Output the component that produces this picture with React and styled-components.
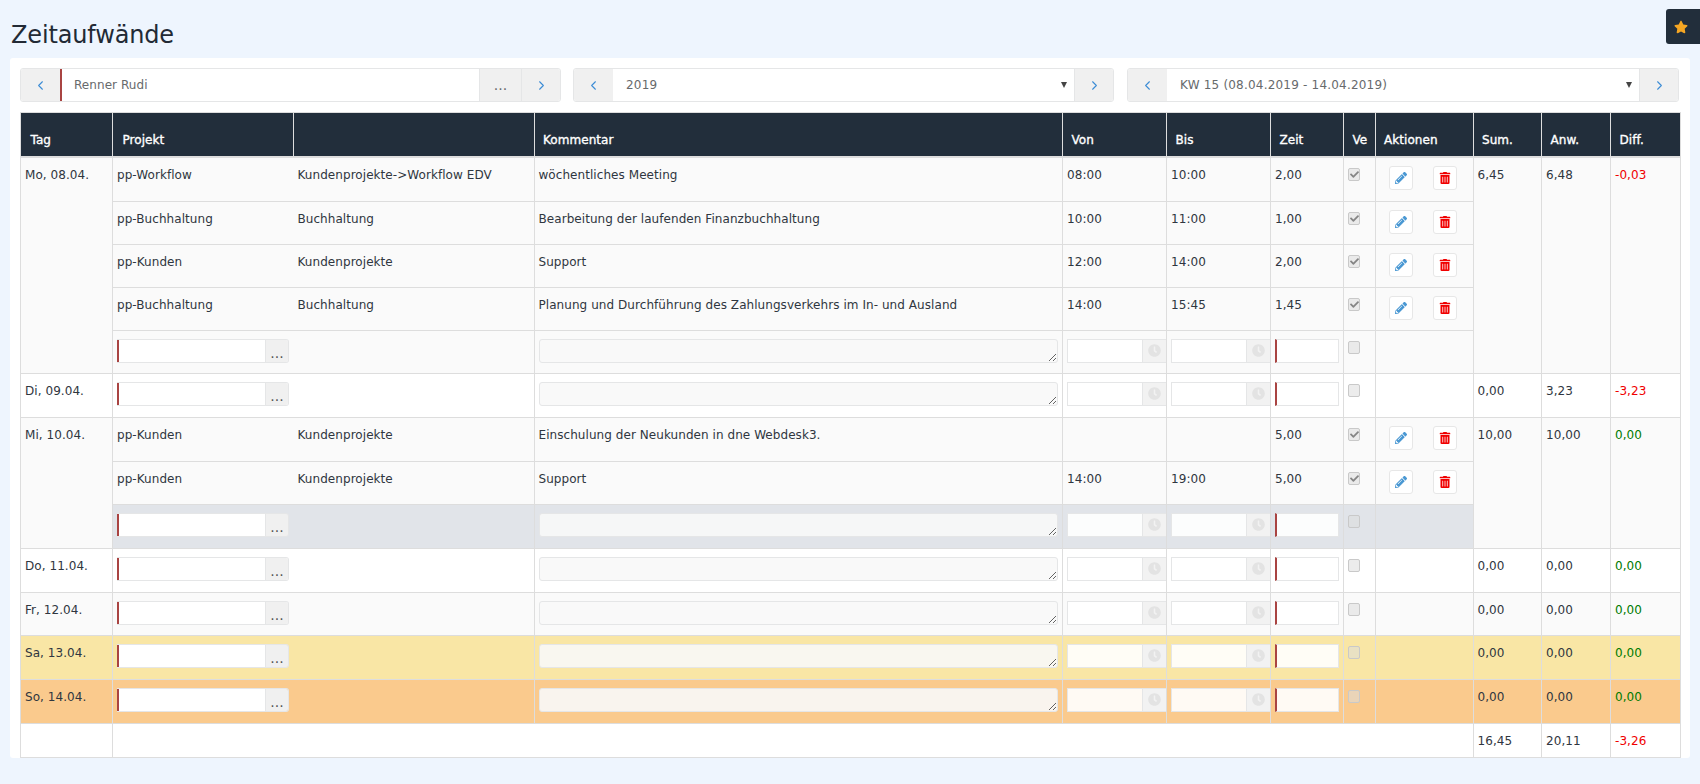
import React from "react";
import styled, { createGlobalStyle } from "styled-components";
import { ChevronLeft, ChevronRight } from "lucide-react";
import { FaStar, FaPencilAlt, FaTrashAlt, FaClock, FaCheck } from "react-icons/fa";

const Global = createGlobalStyle`
  html, body { margin: 0; padding: 0; background: #eef5fe; }
  body { font-family: "DejaVu Sans", Verdana, sans-serif; font-size: 12px; letter-spacing: 0.06px; color: #2f3640; overflow: hidden; }
  * { box-sizing: border-box; }
`;

const Page = styled.div`
  position: relative;
  min-height: 784px;
  padding: 0 10px;
`;
const Title = styled.h1`
  margin: 0;
  height: 58px;
  padding: 19px 0 0 1px;
  font-size: 24px;
  line-height: 32px;
  font-weight: 400;
  letter-spacing: -0.15px;
  color: #222a35;
`;
const StarTab = styled.button`
  position: absolute;
  top: 9px;
  right: 0;
  width: 34px;
  height: 35px;
  border: 0;
  padding: 1px 4px 0 0;
  border-radius: 3px 0 0 3px;
  background: #222e3b;
  color: #f5a623;
  display: flex;
  align-items: center;
  justify-content: center;
  font-size: 14px;
`;
const Card = styled.main`
  background: #fff;
  border-radius: 3px;
  padding: 10px 10px 0;
  height: 700px;
`;
const Toolbar = styled.div`
  display: grid;
  grid-template-columns: 541px 541px 553px;
  column-gap: 12px;
  height: 34px;
  margin-bottom: 10px;
  & > :nth-child(3) { margin-left: 1px; }
`;
const NavGroup = styled.div`
  display: flex;
  height: 34px;
  border: 1px solid #e5e6e7;
  border-radius: 3px;
  overflow: hidden;
  background: #fff;
`;
const NavBtn = styled.button`
  flex: 0 0 ${(p) => p.$w || 39}px;
  border: 0;
  padding: 0;
  background: #f0f0f0;
  color: #3f8ed6;
  display: flex;
  align-items: center;
  justify-content: center;
  font: inherit;
  border-left: ${(p) => (p.$sep ? "1px solid #e5e6e7" : "0")};
`;
const DotsBtn = styled(NavBtn)`
  color: #676a6c;
  font-size: 14px;
`;
const PersonField = styled.input`
  flex: 1;
  min-width: 0;
  border: 0;
  border-left: 2px solid #a94442;
  padding: 0 12px;
  font: inherit;
  letter-spacing: inherit;
  color: #676a6c;
  outline: none;
`;
const SelectWrap = styled.div`
  flex: 1;
  position: relative;
  min-width: 0;
`;
const Select = styled.select`
  width: 100%;
  height: 100%;
  border: 0;
  appearance: none;
  background: #fff;
  padding: 0 13px;
  font: inherit;
  letter-spacing: 0.2px;
  color: #676a6c;
  outline: none;
`;
const Arrow = styled.span`
  position: absolute;
  right: 7px;
  top: 13px;
  width: 0;
  height: 0;
  border-left: 3px solid transparent;
  border-right: 3px solid transparent;
  border-top: 6px solid #444;
`;

const Table = styled.table`
  border-collapse: collapse;
  table-layout: fixed;
  width: 1660px;
`;
const Th = styled.th`
  height: 44.5px;
  background: #222e3b;
  color: #fff;
  font-weight: 400;
  -webkit-text-stroke: 0.35px #fff;
  font-size: 12px;
  text-align: left;
  vertical-align: bottom;
  padding: 0 8px 9px 8.5px;
  border: 1px solid #ddd;
  border-bottom: 2px solid #ddd;
  white-space: nowrap;
  &:nth-child(-n + 2) { padding-left: 9.5px; }
`;
const Tr = styled.tr`
  height: ${(p) => p.$h || 43}px;
  background: ${(p) => p.$bg || "transparent"};
`;
const Td = styled.td`
  border: 1px solid #ddd;
  padding: 8px 4px 0;
  vertical-align: top;
  line-height: 18px;
  background: ${(p) => p.$bg || "transparent"};
  color: ${(p) => p.$color || "inherit"};
  white-space: nowrap;
`;
const ProjectNameTd = styled(Td)`
  border-right: 0;
`;
const ProjectPathTd = styled(Td)`
  border-left: 0;
`;
const FlushTd = styled(Td)`
  padding-right: 0;
`;

const ProjectGroup = styled.div`
  display: flex;
  width: 172px;
  height: 24px;
  border: 1px solid #e5e6e7;
  border-left: 0;
  border-radius: 0 3px 3px 0;
  overflow: hidden;
`;
const ProjectInput = styled.input`
  flex: 1;
  min-width: 0;
  border: 0;
  border-left: 2px solid #a94442;
  background: #fff;
  outline: none;
`;
const ProjectDots = styled.span`
  flex: 0 0 23px;
  background: #f0f0f0;
  border-left: 1px solid #e5e6e7;
  color: #555;
  font-size: 14px;
  line-height: 26px;
  text-align: center;
`;
const Comment = styled.textarea`
  display: block;
  width: 100%;
  height: 24px;
  min-height: 24px;
  border: 1px solid #e5e6e7;
  border-radius: 3px;
  background: rgba(248, 248, 248, 0.9);
  padding: 2px 4px;
  font: inherit;
  outline: none;
  resize: both;
  margin: 0;
`;
const TimeGroup = styled.div`
  display: flex;
  height: 24px;
  width: 100%;
`;
const TimeInput = styled.input`
  flex: 1;
  min-width: 0;
  border: 1px solid #e5e6e7;
  background: rgba(255, 255, 255, 0.9);
  outline: none;
`;
const ClockAddon = styled.span`
  flex: 0 0 23px;
  background: #f2f2f2;
  border-top: 1px solid #e5e6e7;
  border-bottom: 1px solid #e5e6e7;
  color: #e3e3e3;
  display: flex;
  align-items: center;
  justify-content: center;
  padding-right: 1px;
  font-size: 13px;
`;
const HoursInput = styled.input`
  display: block;
  width: 100%;
  height: 24px;
  border: 1px solid #e5e6e7;
  border-left: 2px solid #a94442;
  background: rgba(255, 255, 255, 0.9);
  outline: none;
`;
const Check = styled.span`
  display: flex;
  align-items: center;
  justify-content: center;
  width: 12px;
  height: 13px;
  margin-top: 2px;
  border: 1px solid #c9c9c9;
  border-radius: 2px;
  background: rgba(220, 220, 220, 0.55);
  color: #858585;
  font-size: 9px;
`;
const Actions = styled.div`
  display: flex;
  gap: 20px;
  padding-left: 9.5px;
`;
const IconBtn = styled.button`
  width: 24px;
  height: 24px;
  padding: 0;
  border: 1px solid #e7e7e7;
  border-radius: 3px;
  background: #fff;
  color: ${(p) => p.$color};
  display: flex;
  align-items: center;
  justify-content: center;
  font-size: 12px;
`;

const widths = [92, 181, 240.5, 528.5, 104, 104, 73, 31.5, 98, 68.5, 69, 69.5];
const heads = ["Tag", "Projekt", "", "Kommentar", "Von", "Bis", "Zeit", "Ve", "Aktionen", "Sum.", "Anw.", "Diff."];

const RED = "#f00000";
const GREEN = "#007a00";
const ODD = "#fafafa";

const days = [
  {
    tag: "Mo, 08.04.", bg: ODD, sum: "6,45", anw: "6,48", diff: "-0,03", color: RED,
    heights: [44, 43, 43, 43, 43],
    entries: [
      ["pp-Workflow", "Kundenprojekte->Workflow EDV", "wöchentliches Meeting", "08:00", "10:00", "2,00"],
      ["pp-Buchhaltung", "Buchhaltung", "Bearbeitung der laufenden Finanzbuchhaltung", "10:00", "11:00", "1,00"],
      ["pp-Kunden", "Kundenprojekte", "Support", "12:00", "14:00", "2,00"],
      ["pp-Buchhaltung", "Buchhaltung", "Planung und Durchführung des Zahlungsverkehrs im In- und Ausland", "14:00", "15:45", "1,45"],
    ],
  },
  { tag: "Di, 09.04.", bg: "#fff", sum: "0,00", anw: "3,23", diff: "-3,23", color: RED, heights: [44], entries: [] },
  {
    tag: "Mi, 10.04.", bg: ODD, sum: "10,00", anw: "10,00", diff: "0,00", color: GREEN, formBg: "#e1e4e9",
    heights: [44, 43, 44],
    entries: [
      ["pp-Kunden", "Kundenprojekte", "Einschulung der Neukunden in dne Webdesk3.", "", "", "5,00"],
      ["pp-Kunden", "Kundenprojekte", "Support", "14:00", "19:00", "5,00"],
    ],
  },
  { tag: "Do, 11.04.", bg: "#fff", sum: "0,00", anw: "0,00", diff: "0,00", color: GREEN, heights: [44], entries: [] },
  { tag: "Fr, 12.04.", bg: ODD, sum: "0,00", anw: "0,00", diff: "0,00", color: GREEN, heights: [43], entries: [] },
  { tag: "Sa, 13.04.", bg: "#f9e6a5", sum: "0,00", anw: "0,00", diff: "0,00", color: GREEN, heights: [44], entries: [] },
  { tag: "So, 14.04.", bg: "#faca8d", sum: "0,00", anw: "0,00", diff: "0,00", color: GREEN, heights: [44], entries: [] },
];

function TimeCell({ bg }) {
  return (
    <FlushTd $bg={bg}>
      <TimeGroup>
        <TimeInput />
        <ClockAddon><FaClock /></ClockAddon>
      </TimeGroup>
    </FlushTd>
  );
}

function FormCells({ bg }) {
  return (
    <>
      <FlushTd $bg={bg} colSpan={2}>
        <ProjectGroup>
          <ProjectInput />
          <ProjectDots>...</ProjectDots>
        </ProjectGroup>
      </FlushTd>
      <Td $bg={bg}><Comment /></Td>
      <TimeCell bg={bg} />
      <TimeCell bg={bg} />
      <Td $bg={bg}><HoursInput /></Td>
      <Td $bg={bg}><Check /></Td>
      <Td $bg={bg} />
    </>
  );
}

function EntryCells({ e }) {
  return (
    <>
      <ProjectNameTd>{e[0]}</ProjectNameTd>
      <ProjectPathTd>{e[1]}</ProjectPathTd>
      <Td>{e[2]}</Td>
      <Td>{e[3]}</Td>
      <Td>{e[4]}</Td>
      <Td>{e[5]}</Td>
      <Td><Check><FaCheck /></Check></Td>
      <Td>
        <Actions>
          <IconBtn $color="#4a98d3"><FaPencilAlt /></IconBtn>
          <IconBtn $color="#f00000"><FaTrashAlt /></IconBtn>
        </Actions>
      </Td>
    </>
  );
}

function Day({ d }) {
  const span = d.entries.length + 1;
  const side = (
    <>
      <Td rowSpan={span}>{d.sum}</Td>
      <Td rowSpan={span}>{d.anw}</Td>
      <Td rowSpan={span} $color={d.color}>{d.diff}</Td>
    </>
  );
  return (
    <>
      {d.entries.map((e, i) => (
        <Tr key={i} $bg={d.bg} $h={d.heights[i]}>
          {i === 0 && <Td rowSpan={span}>{d.tag}</Td>}
          <EntryCells e={e} />
          {i === 0 && side}
        </Tr>
      ))}
      <Tr $bg={d.bg} $h={d.heights[d.entries.length]}>
        {d.entries.length === 0 && <Td>{d.tag}</Td>}
        <FormCells bg={d.formBg} />
        {d.entries.length === 0 && side}
      </Tr>
    </>
  );
}

function Nav({ children, first }) {
  return (
    <NavGroup>
      <NavBtn $w={first}><ChevronLeft size={15} strokeWidth={1.75} /></NavBtn>
      {children}
      <NavBtn $sep><ChevronRight size={15} strokeWidth={1.75} /></NavBtn>
    </NavGroup>
  );
}

export default function App() {
  return (
    <Page>
      <Global />
      <Title>Zeitaufwände</Title>
      <StarTab aria-label="Favorit"><FaStar /></StarTab>
      <Card>
        <Toolbar>
          <Nav first={39}>
            <PersonField defaultValue="Renner Rudi" />
            <DotsBtn $w={42} $sep>...</DotsBtn>
          </Nav>
          <Nav first={39}>
            <SelectWrap>
              <Select defaultValue="2019"><option>2019</option></Select>
              <Arrow />
            </SelectWrap>
          </Nav>
          <Nav first={39}>
            <SelectWrap>
              <Select><option>KW 15 (08.04.2019 - 14.04.2019)</option></Select>
              <Arrow />
            </SelectWrap>
          </Nav>
        </Toolbar>
        <Table>
          <colgroup>
            {widths.map((w, i) => <col key={i} style={{ width: w }} />)}
          </colgroup>
          <thead>
            <tr>{heads.map((h, i) => <Th key={i}>{h}</Th>)}</tr>
          </thead>
          <tbody>
            {days.map((d) => <Day key={d.tag} d={d} />)}
            <Tr $h={34}>
              <Td />
              <Td colSpan={8} />
              <Td>16,45</Td>
              <Td>20,11</Td>
              <Td $color={RED}>-3,26</Td>
            </Tr>
          </tbody>
        </Table>
      </Card>
    </Page>
  );
}
